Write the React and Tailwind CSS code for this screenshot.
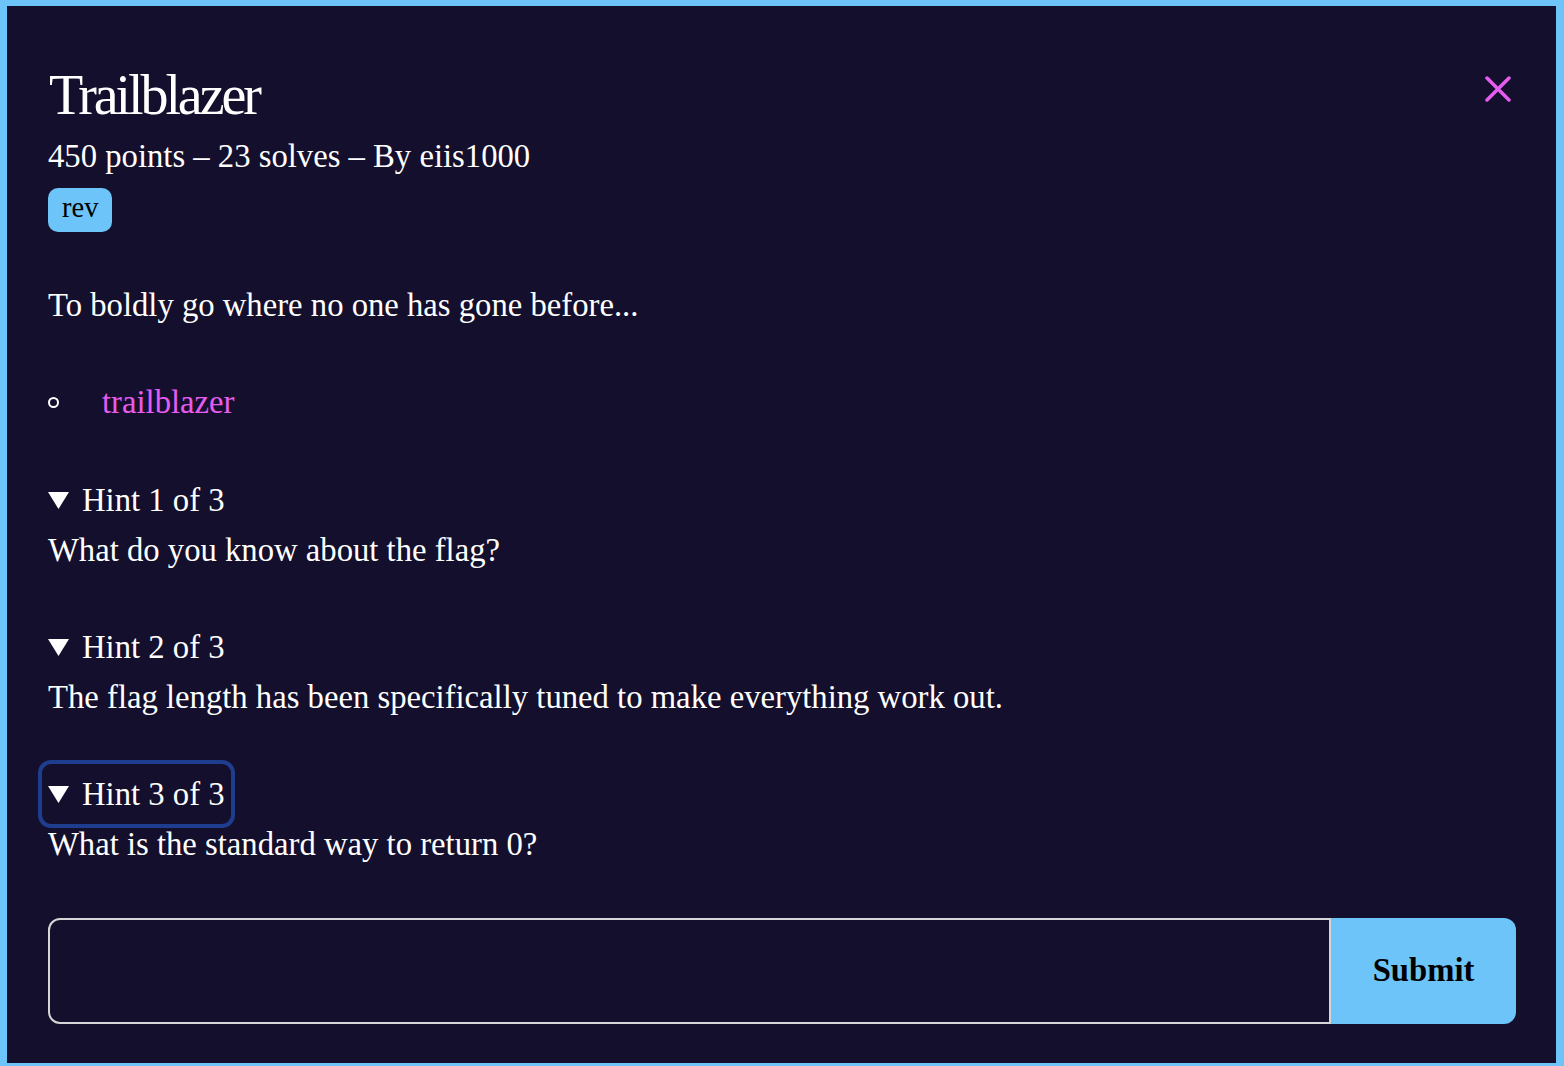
import React from 'react';

const hints = [
  { label: 'Hint 1 of 3', text: 'What do you know about the flag?' },
  { label: 'Hint 2 of 3', text: 'The flag length has been specifically tuned to make everything work out.' },
  { label: 'Hint 3 of 3', text: 'What is the standard way to return 0?', focused: true },
];

const Caret = () => (
  <svg width="21" height="17" viewBox="0 0 21 17" className="shrink-0">
    <polygon points="0,0 21,0 10.5,17" fill="#ffffff" />
  </svg>
);

const Hint = ({ label, text, focused, first }) => {
  return (
    <div className={first ? 'mt-[50px]' : 'mt-[49px]'}>
      {/* summary row */}
      <div
        className={
          'flex items-center gap-[13px] w-fit leading-[48px] rounded-[3px] ' +
          (focused ? 'outline-4 outline-offset-[6px] outline-[#1f3d8f]' : '')
        }
      >
        <Caret />
        <span>{label}</span>
      </div>
      <p className="mt-[2px] leading-[48px]">{text}</p>
    </div>
  );
};

export default function App() {
  return (
    <div
      className="h-[1066px] overflow-hidden border-t-[6px] border-l-[7px] border-r-[8px] border-b-[3px] border-[#6cc4f9] bg-[#140f2c] text-white text-[32.7px] pl-[41px] pr-[40px] pt-[57px]"
      style={{ fontFamily: '"Liberation Serif", "Times New Roman", serif' }}
    >
      {/* Header */}
      <div className="flex items-start justify-between">
        <h1 className="ml-[1px] text-[56px] leading-[64px] tracking-[-0.055em] font-normal">Trailblazer</h1>
        <button className="mt-[13px] mr-[5px] text-[#e65cf0]">
          <svg width="26" height="26" viewBox="0 0 26 26">
            <path d="M2 2 L24 24 M24 2 L2 24" stroke="currentColor" strokeWidth="3.5" strokeLinecap="round" />
          </svg>
        </button>
      </div>
      <p className="mt-[9px] leading-[40px]">450 points – 23 solves – By eiis1000</p>
      <div className="mt-[12px] w-fit h-[44px] px-[14px] pb-[4px] rounded-[10px] bg-[#6cc4f9] text-black text-[28.5px] leading-[40px]">
        rev
      </div>

      {/* Description */}
      <p className="mt-[49px] leading-[48px]">To boldly go where no one has gone before...</p>

      <ul className="mt-[49px]">
        <li className="flex items-center leading-[48px]">
          <span className="w-[11px] h-[11px] rounded-full border-2 border-white shrink-0"></span>
          <a className="ml-[43px] text-[#e65cf0]">trailblazer</a>
        </li>
      </ul>

      {/* Hints */}
      {hints.map((h, i) => (
        <Hint key={h.label} {...h} first={i === 0} />
      ))}

      {/* Flag form */}
      <div className="mt-[50px] flex h-[106px]">
        <input
          className="flex-1 bg-transparent border-2 border-[#d6d6d6] rounded-l-[12px] outline-none px-4 text-white"
          type="text"
        />
        <button className="w-[185px] bg-[#6cc4f9] rounded-r-[12px] text-black font-bold text-[32.7px]">
          Submit
        </button>
      </div>
    </div>
  );
}
